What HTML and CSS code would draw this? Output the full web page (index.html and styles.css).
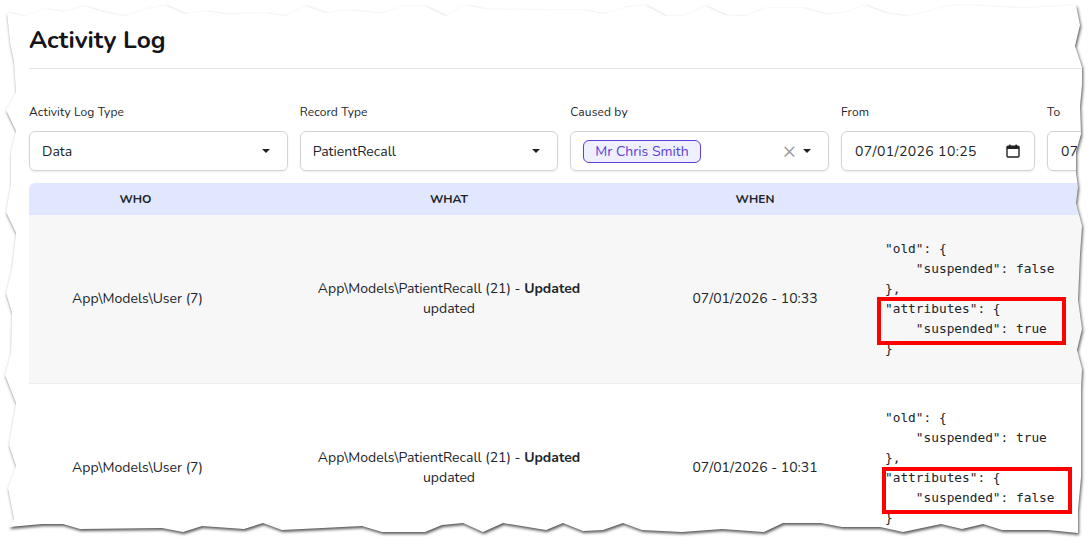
FILE: index.html
```html
<!DOCTYPE html>
<html lang="en">
<head>
<meta charset="utf-8">
<title>Activity Log</title>
<link rel="stylesheet" href="styles.css">
</head>
<body>
<main class="page">
  <h1 class="title">Activity Log</h1>
  <form class="filters">
    <div class="field f-wide"><label class="label">Activity Log Type</label><div class="control">Data<span class="caret"></span></div></div>
    <div class="field f-wide"><label class="label">Record Type</label><div class="control">PatientRecall<span class="caret"></span></div></div>
    <div class="field f-wide"><label class="label">Caused by</label><div class="control"><span class="chip">Mr Chris Smith</span><span class="clear">×</span><span class="caret caret-tight"></span></div></div>
    <div class="field f-date"><label class="label">From</label><div class="control control-date">07/01/2026 10:25<svg class="cal" viewBox="0 0 14 14"><path d="M1 3.2a1 1 0 0 1 1-1h10a1 1 0 0 1 1 1V12a1 1 0 0 1-1 1H2a1 1 0 0 1-1-1z" fill="none" stroke="#222" stroke-width="1.4"/><rect x="1" y="2.4" width="12" height="2.6" fill="#222"/><rect x="3" y="0.6" width="1.6" height="2" fill="#222"/><rect x="9.4" y="0.6" width="1.6" height="2" fill="#222"/></svg></div></div>
    <div class="field f-date"><label class="label">To</label><div class="control control-date">07/01/2026 10:25</div></div>
  </form>
  <div class="table">
    <div class="row head"><div>WHO</div><div>WHAT</div><div>WHEN</div><div></div></div>
    <div class="row odd">
      <div class="cell who">App\Models\User (7)</div>
      <div class="cell">App\Models\PatientRecall (21) - <b>Updated</b><br>updated</div>
      <div class="cell">07/01/2026 - 10:33</div>
      <div class="json"><pre>"old": {
    "suspended": false
},
"attributes": {
    "suspended": true
}<span class="mark mark-a"></span></pre></div>
    </div>
    <div class="row">
      <div class="cell who">App\Models\User (7)</div>
      <div class="cell">App\Models\PatientRecall (21) - <b>Updated</b><br>updated</div>
      <div class="cell">07/01/2026 - 10:31</div>
      <div class="json"><pre>"old": {
    "suspended": true
},
"attributes": {
    "suspended": false
}<span class="mark mark-b"></span></pre></div>
    </div>
  </div>
</main>
<svg class="torn" viewBox="0 0 1092 545" aria-hidden="true">
  <defs>
    <filter id="blur" x="-5%" y="-5%" width="110%" height="110%"><feGaussianBlur stdDeviation="1.7"/></filter>
    <path id="paper" d="M7 12L24 16L45 9L64 11.500L85 6L104 12L125 16L146 9L165 5L185 14L205 11L226 14L266 13L286 16L306 6L326 13L345 10L383 13L404 6L425 6L446 16L465 5L486 9L546 10L584 10L605 14L626 7L645 5L666 16L685 15L706 6L725 15L745 16L765 8L804 8L825 14L844 13L865 5L886 13L907 16L926 12L947 6L968 5L1023 8L1076 5L1080 25L1075 46L1082 67L1082 85L1080 106L1081 134L1076 152L1076 173L1078 187L1076 203L1082 226L1080 254L1078 300L1082 329L1077 350L1082 369L1081 389L1081 424L1081 477L1078 510L1078 533L1048 530L1002 530L983 524L962 529L941 524L903 532L880 527L842 527L821 523L783 523L764 532L722 529L682 532L642 530L623 523L603 530L583 531L563 523L546 530L503 523L483 532L463 523L442 525L425 532L382 532L362 526L282 530L263 523L244 529L202 526L183 532L162 528L80 529L63 524L42 524L9 527L14 519L8 488L16 466L9 445L16 403L5 375L11 353L12 313L6 293L12 269L16 233L6 212L11 184L11 152L16 131L6 110L16 92L14 62L10 42Z"/>
    <clipPath id="outside"><path clip-rule="evenodd" d="M0 0H1092V545H0ZM7 12L24 16L45 9L64 11.500L85 6L104 12L125 16L146 9L165 5L185 14L205 11L226 14L266 13L286 16L306 6L326 13L345 10L383 13L404 6L425 6L446 16L465 5L486 9L546 10L584 10L605 14L626 7L645 5L666 16L685 15L706 6L725 15L745 16L765 8L804 8L825 14L844 13L865 5L886 13L907 16L926 12L947 6L968 5L1023 8L1076 5L1080 25L1075 46L1082 67L1082 85L1080 106L1081 134L1076 152L1076 173L1078 187L1076 203L1082 226L1080 254L1078 300L1082 329L1077 350L1082 369L1081 389L1081 424L1081 477L1078 510L1078 533L1048 530L1002 530L983 524L962 529L941 524L903 532L880 527L842 527L821 523L783 523L764 532L722 529L682 532L642 530L623 523L603 530L583 531L563 523L546 530L503 523L483 532L463 523L442 525L425 532L382 532L362 526L282 530L263 523L244 529L202 526L183 532L162 528L80 529L63 524L42 524L9 527L14 519L8 488L16 466L9 445L16 403L5 375L11 353L12 313L6 293L12 269L16 233L6 212L11 184L11 152L16 131L6 110L16 92L14 62L10 42Z"/></clipPath>
  </defs>
  <g clip-path="url(#outside)">
    <rect class="edge-paper" width="1092" height="545"/>
    <use class="edge-shadow" href="#paper" filter="url(#blur)" transform="translate(1 2)"/>
  </g>
</svg>
</body>
</html>
```
FILE: styles.css
```css
* { box-sizing: border-box; }
html, body { margin: 0; height: 100%; overflow: hidden; background: #fff; }
body { font-family: "Nunito", "Lato", "Open Sans", sans-serif; color: #212529; font-size: 14px; }
.page { width: 1092px; height: 545px; padding: 24px 0 0 29px; overflow: hidden; }
.title { margin: 0; font-size: 24.5px; line-height: 32px; font-weight: 700; color: #14151a; padding-bottom: 12px; border-bottom: 1px solid #e5e5e5; }
.filters { display: flex; gap: 12px; margin-top: 35px; width: 1200px; }
.field { flex: none; }
.f-wide { width: 258.67px; }
.f-date { width: 194px; }
.label { display: block; font-size: 12px; letter-spacing: .12px; line-height: 16px; margin-bottom: 11px; color: #212529; }
.control { height: 40px; border: 1px solid #d4d4d4; border-radius: 6px; box-shadow: 0 1px 2px rgba(0,0,0,.08); display: flex; align-items: center; padding: 0 12px; font-size: 14px; color: #212529; }
.caret { margin-left: auto; margin-right: 5px; width: 0; height: 0; border: 4px solid transparent; border-top: 4px solid #222; border-bottom: 0; }
.caret-tight { margin-left: 7px; margin-right: 5px; }
.chip { border: 1px solid #5b3fd6; border-radius: 6px; background: #eef0ff; color: #5b3fd6; padding: 0 11px; line-height: 21px; }
.clear { margin-left: auto; color: #999; font-size: 22px; line-height: 1; }
.control-date { letter-spacing: .4px; padding: 0 14px 0 13px; }
.cal { margin-left: auto; width: 14px; height: 14px; }
.table { margin-top: 12px; width: 1200px; }
.row { display: grid; grid-template-columns: 213px 414px 198px 1fr; text-align: center; align-items: center; height: 169px; border-bottom: 1px solid #eee; }
.head { height: 32px; background: #e0e7ff; border-radius: 6px 6px 0 0; font-size: 12px; font-weight: 700; border: 0; }
.odd { background: #f7f7f7; }
.cell { line-height: 20px; }
.who { padding-left: 4px; }
.json { text-align: left; padding-left: 31px; }
.json pre { position: relative; margin: 0; font-family: "DejaVu Sans Mono", monospace; font-size: 12.8px; line-height: 20px; color: #212529; }
.mark { position: absolute; border: 4px solid #f00; }
.mark-a { left: -8px; top: 58px; width: 189px; height: 48px; }
.mark-b { left: -3px; top: 59px; width: 190px; height: 47px; }
.torn { position: absolute; left: 0; top: 0; width: 1092px; height: 545px; pointer-events: none; }
.edge-paper { fill: #fff; }
.edge-shadow { fill: #555; }
```
